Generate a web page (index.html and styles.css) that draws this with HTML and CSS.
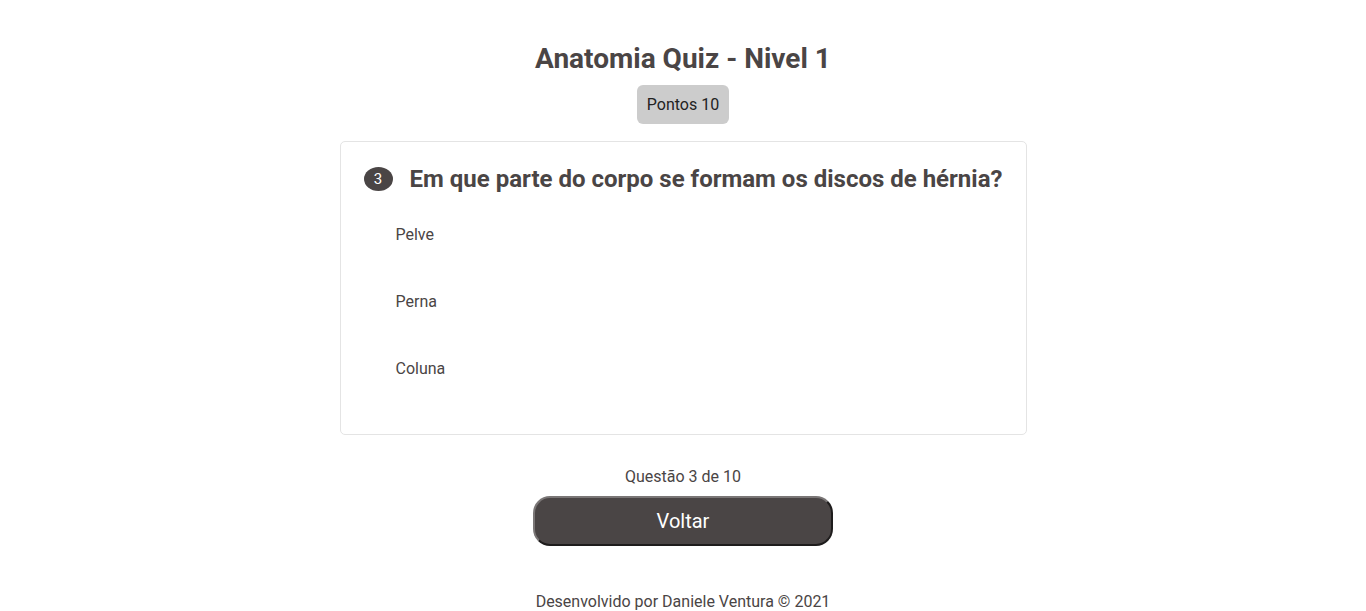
FILE: index.html
```html
<!DOCTYPE html>
<html lang="pt">
<head>
<meta charset="utf-8">
<title>Anatomia Quiz</title>
<link rel="stylesheet" href="styles.css">
</head>
<body>
<main class="page">
  <h1 class="title">Anatomia Quiz - Nivel 1</h1>
  <div class="score">Pontos 10</div>
  <section class="card">
    <div class="question">
      <span class="num">3</span>
      <h2 class="qtext">Em que parte do corpo se formam os discos de hérnia?</h2>
    </div>
    <ul class="options">
      <li class="option">Pelve</li>
      <li class="option">Perna</li>
      <li class="option">Coluna</li>
    </ul>
  </section>
  <p class="progress">Questão 3 de 10</p>
  <button class="back">Voltar</button>
  <footer class="footer">Desenvolvido por Daniele Ventura © 2021</footer>
</main>
</body>
</html>
```

FILE: styles.css
```css
* { box-sizing: border-box; }
html, body { margin: 0; padding: 0; background: #fff; }
body {
  font-family: Roboto, "Liberation Sans", Arial, sans-serif;
  color: #4a4545;
  font-size: 16px;
}
.page {
  display: flex;
  flex-direction: column;
  align-items: center;
  padding-top: 42px;
}
.title {
  margin: 0;
  font-size: 28px;
  font-weight: 700;
  line-height: 34px;
}
.score {
  margin-top: 9px;
  background: #cccccc;
  color: #222;
  border-radius: 6px;
  height: 39px;
  padding: 0 10px;
  display: flex;
  align-items: center;
  font-size: 16px;
}
.card {
  margin-top: 17px;
  width: 687px;
  height: 294px;
  border: 1px solid #e4e4e4;
  border-radius: 5px;
  padding: 22px 16px 0 23px;
}
.question {
  display: flex;
  align-items: center;
  gap: 17px;
}
.num {
  width: 29px;
  height: 24px;
  border-radius: 50%;
  background: #4a4545;
  color: #fff;
  font-size: 15px;
  display: flex;
  align-items: center;
  justify-content: center;
  flex: none;
}
.qtext {
  margin: 0;
  font-size: 24px;
  font-weight: 700;
  line-height: 30px;
  white-space: nowrap;
}
.options {
  list-style: none;
  margin: 31px 0 0 0;
  padding: 0 0 0 32px;
  display: flex;
  flex-direction: column;
  gap: 48px;
}
.option {
  line-height: 19px;
  font-size: 16px;
}
.progress {
  margin: 32px 0 0 0;
  line-height: 19px;
}
.back {
  margin-top: 10px;
  width: 300px;
  height: 50px;
  background: #4a4545;
  color: #fff;
  font-family: inherit;
  font-size: 20px;
  border: 2px solid;
  border-color: #7a7676 #1e1c1c #1e1c1c #7a7676;
  border-radius: 17px;
}
.footer {
  margin-top: 46px;
  line-height: 19px;
}
```
